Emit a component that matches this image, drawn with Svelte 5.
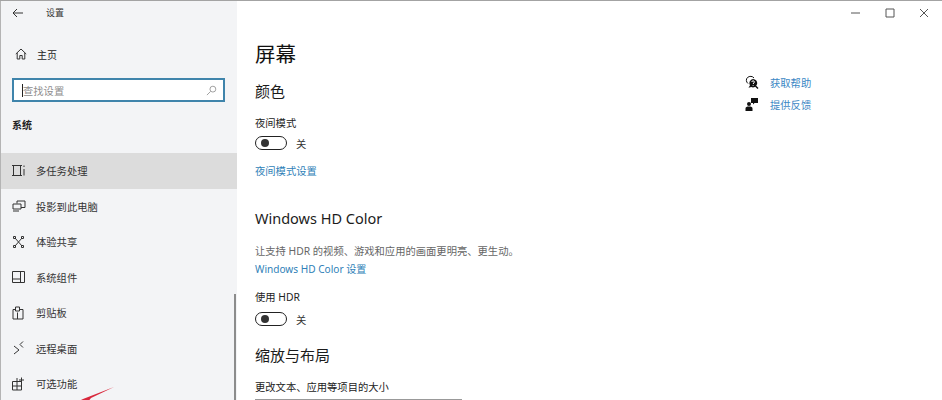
<script>
  const items = [
    { label: '多任务处理', icon: 'M2 1.500h10M2 11.500h10M3.500 1.500v10M10.500 1.500v10M14 1.500v1.500M14 5v6.500', active: true },
    { label: '投影到此电脑', icon: 'M7 4.500V2h8v6.500h-4M3 5h8v5H3zM3 12h6' },
    { label: '体验共享', icon: 'M5 3l7 8M12 3l-7 8M3.500 1.500h2v2h-2zM11.500 1.500h2v2h-2zM3.500 10.500h2v2h-2zM11.500 10.500h2v2h-2z' },
    { label: '系统组件', icon: 'M2.500 1.500h12v11h-12zM10.500 1.500v11M2.500 9h8' },
    { label: '剪贴板', icon: 'M3 3.500h2.500M10 3.500h3v9.500H3V3.500M5.500 1h4v4h-4zM7.500 6.500V13' },
    { label: '远程桌面', icon: 'M4 5l5 4-5 4M13 .500L10 3.500l3 3' },
    { label: '可选功能', icon: 'M2.500 4.500h9v8.500h-9zM7 4.500V13M2.500 9h9M7 1v3.500M11.500 .500v5M9 3h5' }
  ];
</script>

<div class="window">
  <aside class="sidebar">
    <div class="titlebar">
      <svg class="back" viewBox="0 0 12 10" width="12" height="10"><path d="M5 1L1 5l4 4M1 5h10" /></svg>
      <span>设置</span>
    </div>
    <div class="home">
      <svg viewBox="0 0 12 12" width="12" height="12"><path d="M.8 6L6 1l5.200 5M2.200 5v6h2.600V7.500h2.400V11h2.600V5" /></svg>
      <span>主页</span>
    </div>
    <div class="search">
      <span class="caret"></span>
      <span class="placeholder">查找设置</span>
      <svg viewBox="0 0 12 12" width="11" height="11"><circle cx="7.500" cy="4.500" r="3.200" /><path d="M5 7l-4 4" /></svg>
    </div>
    <div class="group">系统</div>
    <nav>
      {#each items as item}
        <div class="item" class:active={item.active}>
          <svg viewBox="0 0 18 14" width="18" height="14"><path d={item.icon} /></svg>
          <span>{item.label}</span>
        </div>
      {/each}
    </nav>
    <span class="scrollbar"></span>
    <svg class="arrow" viewBox="0 0 40 16" width="40" height="16"><path d="M39 0L8 12 0 16h12L16 11z" /></svg>
  </aside>

  <main class="content">
    <div class="controls">
      <svg viewBox="0 0 10 10" width="10" height="10"><path d="M0 5h9" /></svg>
      <svg viewBox="0 0 10 10" width="10" height="10"><path d="M1 1h8v8H1z" /></svg>
      <svg viewBox="0 0 10 10" width="10" height="10"><path d="M1 1l8 8M9 1L1 9" /></svg>
    </div>
    <div class="columns">
      <section class="settings">
        <h1>屏幕</h1>
        <h2>颜色</h2>
        <p class="label first">夜间模式</p>
        <div class="toggle"><span class="switch"><i></i></span><span>关</span></div>
        <p class="link night">夜间模式设置</p>
        <h2 class="hd">Windows HD Color</h2>
        <p class="desc">让支持 HDR 的视频、游戏和应用的画面更明亮、更生动。</p>
        <p class="link hdlink">Windows HD Color 设置</p>
        <p class="label hdr">使用 HDR</p>
        <div class="toggle second"><span class="switch"><i></i></span><span>关</span></div>
        <h2 class="scale">缩放与布局</h2>
        <p class="label size">更改文本、应用等项目的大小</p>
        <div class="select"></div>
      </section>
      <aside class="help">
        <div class="help-row">
          <svg viewBox="0 0 14 14" width="14" height="14">
            <path class="thin" d="M3 8.500C1 7 .8 4 2.500 2.500 4.500 .8 7.500 1 9 3" />
            <path class="fill" d="M8 4a4.200 4.200 0 1 1-1.800 8L3.500 12.800 5 10.300A4.200 4.200 0 0 1 8 4zM11 10.500l2.500 2.500-1 1-2.500-2.500z" />
            <path class="mark" d="M6.800 7c0-1.600 2.600-1.600 2.600 0 0 1-1.300 1-1.300 2M8.100 10v.8" />
          </svg>
          <span>获取帮助</span>
        </div>
        <div class="help-row">
          <svg viewBox="0 0 14 14" width="14" height="14">
            <path class="fill" d="M6 1h7v5H9.500L8 7.500V6H6zM4 5a2 2 0 1 1 0 4 2 2 0 0 1 0-4zM.5 14v-2.500c0-1.500 1.300-2 3.500-2s3.500.5 3.500 2V14z" />
          </svg>
          <span>提供反馈</span>
        </div>
      </aside>
    </div>
  </main>
</div>

<style>
  :global(body) {
    margin: 0;
    overflow: hidden;
  }
  .window {
    display: flex;
    width: 942px;
    height: 400px;
    box-sizing: border-box;
    overflow: hidden;
    border-top: 1px solid #a3a3a3;
    background: #fff;
    color: #222;
    font-family: "Noto Sans", "Noto Sans CJK SC", sans-serif;
    font-size: 10.300px;
  }
  svg {
    flex: none;
    fill: none;
    stroke: #333;
    stroke-width: 1;
  }
  .sidebar {
    position: relative;
    display: flex;
    flex-direction: column;
    flex: none;
    width: 237px;
    box-sizing: border-box;
    border-left: 1px solid #b4b4b4;
    background: #f3f4f6;
  }
  .titlebar, .home, .search, .group, nav {
    flex: none;
  }
  .titlebar {
    display: flex;
    align-items: center;
    height: 23px;
    padding-left: 11px;
    font-size: 9px;
    color: #333;
  }
  .titlebar span {
    margin-left: 22px;
  }
  .home {
    display: flex;
    align-items: center;
    gap: 10px;
    margin-top: 18px;
    height: 24px;
    padding-left: 14px;
    font-size: 10px;
  }
  .search {
    display: flex;
    align-items: center;
    box-sizing: border-box;
    width: 213px;
    height: 24px;
    margin: 12px 0 0 11px;
    padding: 0 6px 0 8px;
    border: 2px solid #3f84ab;
    background: #fff;
  }
  .caret {
    width: 1px;
    height: 13px;
    background: #222;
  }
  .placeholder {
    flex: 1;
    color: #8d8d8d;
    font-size: 10.300px;
  }
  .search svg {
    stroke: #999;
  }
  .group {
    margin: 15px 0 0 11px;
    height: 15px;
    font-size: 10px;
    font-weight: 700;
  }
  nav {
    margin-top: 21px;
  }
  .item {
    display: flex;
    align-items: center;
    gap: 8px;
    height: 35.500px;
    padding-left: 9px;
    color: #333;
    font-size: 10.300px;
  }
  .item.active {
    background: #dcdcdc;
  }
  .scrollbar {
    position: absolute;
    right: 1px;
    top: 293px;
    width: 2px;
    height: 110px;
    background: #8c8c8c;
  }
  .arrow {
    position: absolute;
    left: 74px;
    top: 386px;
    stroke: none;
    fill: #d8283c;
  }
  .content {
    flex: 1;
    min-width: 0;
    display: flex;
    flex-direction: column;
  }
  .controls {
    display: flex;
    justify-content: flex-end;
    gap: 24px;
    height: 24px;
    padding: 7px 13px 0 0;
    box-sizing: border-box;
  }
  .controls svg {
    stroke: #555;
  }
  .columns {
    display: flex;
    padding-left: 18px;
  }
  .settings {
    width: 490px;
  }
  h1, h2, p {
    margin: 0;
    font-weight: 400;
  }
  h1 {
    margin-top: 15px;
    height: 28px;
    line-height: 28px;
    font-size: 20.500px;
    color: #111;
  }
  h2 {
    height: 22px;
    line-height: 22px;
    font-size: 15px;
    color: #1c1c1c;
  }
  h1 + h2 {
    margin-top: 12px;
  }
  .label {
    height: 15px;
    line-height: 15px;
  }
  .first {
    margin-top: 14px;
  }
  .toggle {
    display: flex;
    align-items: center;
    gap: 9px;
    height: 16px;
    margin-top: 4px;
    color: #333;
  }
  .toggle.second {
    margin-top: 6px;
  }
  .switch {
    display: flex;
    align-items: center;
    box-sizing: border-box;
    width: 32px;
    height: 14px;
    padding-left: 4.500px;
    border: 1.500px solid #222;
    border-radius: 7px;
  }
  .switch i {
    width: 8px;
    height: 8px;
    border-radius: 50%;
    background: #333;
  }
  .link {
    color: #2f7fb8;
    height: 15px;
    line-height: 15px;
  }
  .night {
    margin-top: 13px;
  }
  .hd {
    margin-top: 28px;
    font-size: 14.500px;
  }
  .desc {
    margin-top: 15px;
    height: 15px;
    line-height: 15px;
    color: #666;
    white-space: nowrap;
  }
  .hdlink {
    margin-top: 3px;
    font-size: 10.100px;
  }
  .hdr {
    margin-top: 13px;
  }
  .scale {
    margin-top: 17px;
  }
  .size {
    margin-top: 14px;
    line-height: 15px;
  }
  .select {
    width: 207px;
    height: 1px;
    margin-top: 4px;
    background: #999;
  }
  .help {
    margin-top: 46px;
  }
  .help-row {
    display: flex;
    align-items: center;
    gap: 11px;
    height: 22px;
    color: #3b87c4;
  }
  .help-row .fill {
    fill: #111;
    stroke: none;
  }
  .help-row .thin {
    stroke: #111;
  }
  .help-row .mark {
    stroke: #fff;
  }
</style>
